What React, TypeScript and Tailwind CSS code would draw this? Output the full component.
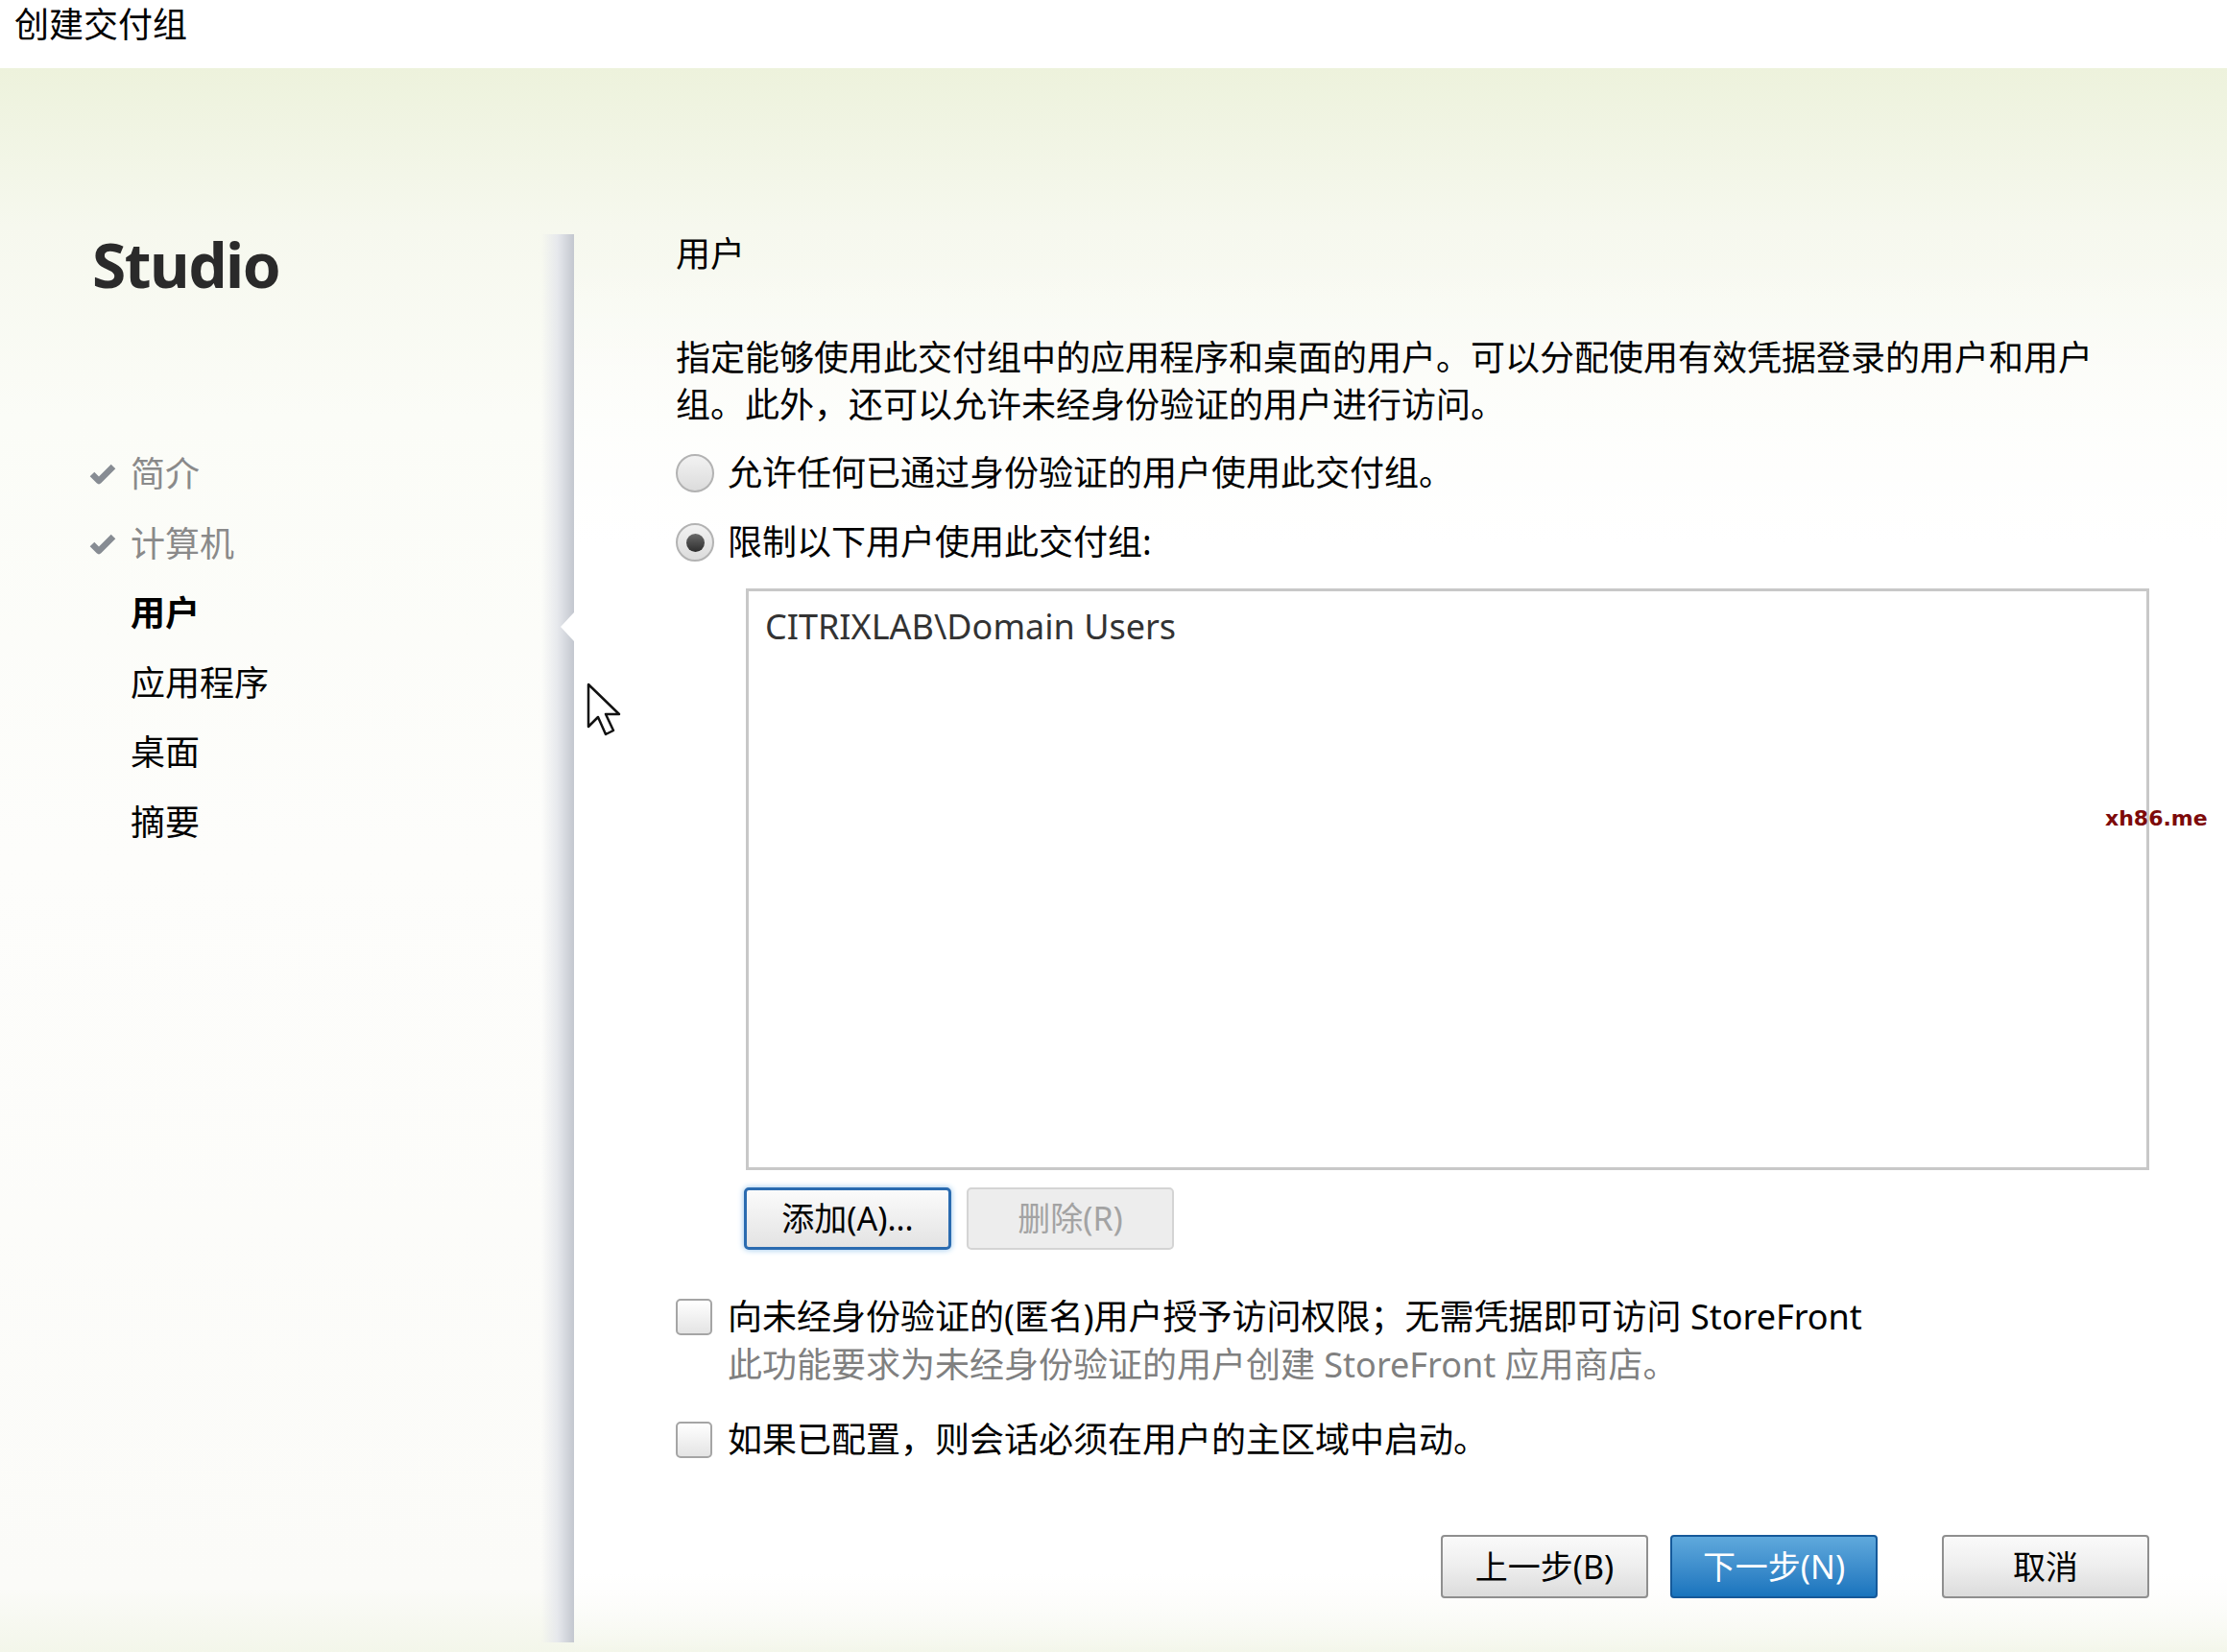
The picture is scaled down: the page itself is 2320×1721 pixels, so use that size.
import * as React from "react"

const font = { fontFamily: '"Noto Sans", "Noto Sans CJK SC", sans-serif' }

const steps = [
  { label: "简介", done: true },
  { label: "计算机", done: true },
  { label: "用户", current: true },
  { label: "应用程序" },
  { label: "桌面" },
  { label: "摘要" },
]

function Check() {
  return (
    <svg width="28" height="24" viewBox="0 0 28 24">
      <path d="M3 12 L10 19 L25 4" fill="none" stroke="#878c93" strokeWidth="6.5" strokeLinejoin="round" />
    </svg>
  )
}

function Radio({ checked }: { checked?: boolean }) {
  return (
    <span className="flex h-[40px] w-[40px] shrink-0 items-center justify-center rounded-full border-2 border-[#b3b3b3] bg-gradient-to-b from-[#f2f2f2] to-[#dcdcdc]">
      {checked && <span className="h-[19px] w-[19px] rounded-full bg-gradient-to-b from-[#6a6a6a] to-[#2e2e2e]" />}
    </span>
  )
}

function Box() {
  return <span className="h-[38px] w-[38px] shrink-0 rounded-[5px] border-2 border-[#a5a5a5] bg-gradient-to-b from-[#ffffff] to-[#e4e4e4]" />
}

function Cursor() {
  return (
    <svg width="40" height="60" viewBox="0 0 40 60">
      <path d="M2 2 L2 46 L12 36 L20 54 L28 50 L20 33 L34 33 Z" fill="#fff" stroke="#111" strokeWidth="2.5" strokeLinejoin="round" />
    </svg>
  )
}

export default function App() {
  return (
    <div className="flex h-[1721px] w-[2320px] flex-col overflow-hidden text-[36px] text-black" style={font}>
      <div className="h-[71px] bg-white pl-[15px] pt-[2px] leading-[48px]">创建交付组</div>

      <div className="relative flex h-[1650px] bg-[linear-gradient(180deg,#edf2dc_0%,#f6f8ee_10%,#fbfcf7_22%,#fdfdfb_50%,#fbfbf8_96%,#f3f6ea_100%)]">
        {/* left nav */}
        <div className="flex w-[598px] shrink-0">
          <div className="flex-1 pl-[96px]">
            <div className="mt-[165px] h-[80px] text-[64px] font-bold leading-[80px] tracking-[-1.5px] text-[#2a2a2a]">Studio</div>
            <div className="mt-[142px] flex flex-col">
              {steps.map((s) => (
                <div key={s.label} className="flex h-[72.5px] items-center">
                  <span className="-ml-[3px] flex w-[43px] items-center">{s.done && <Check />}</span>
                  <span className={s.done ? "text-[#8a8a8a]" : s.current ? "font-bold text-black" : "text-black"}>{s.label}</span>
                </div>
              ))}
            </div>
          </div>
          <div className="relative mt-[173px] mb-[10px] w-[34px] bg-gradient-to-r from-[#fbfbfb00] via-[#e6e8ec] to-[#c3c7cf]">
            <span className="absolute right-0 top-[394px] h-0 w-0 border-y-[15px] border-r-[14px] border-y-transparent border-r-white" />
          </div>
        </div>

        {/* main */}
        <div className="flex flex-1 flex-col pl-[106px] pr-[81px] bg-[linear-gradient(180deg,#ffffff00_0%,#ffffff00_12%,#ffffff_30%,#ffffff_95%,#ffffff00_100%)]">
          <div className="mt-[170px] h-[48px] leading-[48px]">用户</div>
          <div className="mt-[59px] w-[1490px] leading-[49px]">
            指定能够使用此交付组中的应用程序和桌面的用户。可以分配使用有效凭据登录的用户和用户组。此外，还可以允许未经身份验证的用户进行访问。
          </div>
          <div className="mt-[23px] flex h-[48px] items-center gap-[14px]">
            <Radio />
            <span>允许任何已通过身份验证的用户使用此交付组。</span>
          </div>
          <div className="mt-[24px] flex h-[48px] items-center gap-[14px]">
            <Radio checked />
            <span>限制以下用户使用此交付组:</span>
          </div>

          <div className="ml-[73px] mt-[24px] h-[606px] border-[3px] border-[#c8c8c8] bg-white pl-[17px] pt-[13px]">
            <div className="leading-[48px] text-[#333]">CITRIXLAB\Domain Users</div>
          </div>

          <div className="ml-[71px] mt-[18px] flex gap-[16px]">
            <button className="h-[65px] w-[216px] rounded-[5px] border-[3px] border-[#2a6bb0] bg-gradient-to-b from-[#fbfbfb] to-[#e3e3e3] shadow-[0_0_6px_#8fc0ea] text-[34px]">
              添加(A)...
            </button>
            <button className="h-[65px] w-[216px] rounded-[5px] border-2 border-[#d4d4d4] bg-[#ededed] text-[34px] text-[#a3a3a3]">
              删除(R)
            </button>
          </div>

          <div className="mt-[46px] flex h-[48px] items-center gap-[16px]">
            <Box />
            <span>向未经身份验证的(匿名)用户授予访问权限；无需凭据即可访问 StoreFront</span>
          </div>
          <div className="h-[52px] pl-[54px] leading-[52px] text-[#808080]">此功能要求为未经身份验证的用户创建 StoreFront 应用商店。</div>
          <div className="mt-[28px] flex h-[48px] items-center gap-[16px]">
            <Box />
            <span>如果已配置，则会话必须在用户的主区域中启动。</span>
          </div>

          <div className="mt-[75px] flex justify-end">
            <button className="h-[66px] w-[216px] rounded-[4px] border-2 border-[#8f8f8f] bg-gradient-to-b from-[#fafafa] via-[#eeeeee] to-[#dcdcdc] text-[34px]">
              上一步(B)
            </button>
            <button className="ml-[23px] h-[66px] w-[216px] rounded-[4px] border-2 border-[#15599a] bg-gradient-to-b from-[#5fa9dc] to-[#1874bd] text-[34px] text-white">
              下一步(N)
            </button>
            <button className="ml-[67px] h-[66px] w-[216px] rounded-[4px] border-2 border-[#8f8f8f] bg-gradient-to-b from-[#fafafa] via-[#eeeeee] to-[#dcdcdc] text-[34px]">
              取消
            </button>
          </div>
        </div>

        <div className="absolute left-[611px] top-[640px]">
          <Cursor />
        </div>
        <div className="absolute left-[2193px] top-[767px] text-[22px] font-bold leading-[30px] text-[#7d0a0a]" style={{ fontFamily: '"DejaVu Sans", sans-serif' }}>
          xh86.me
        </div>
      </div>
    </div>
  )
}
